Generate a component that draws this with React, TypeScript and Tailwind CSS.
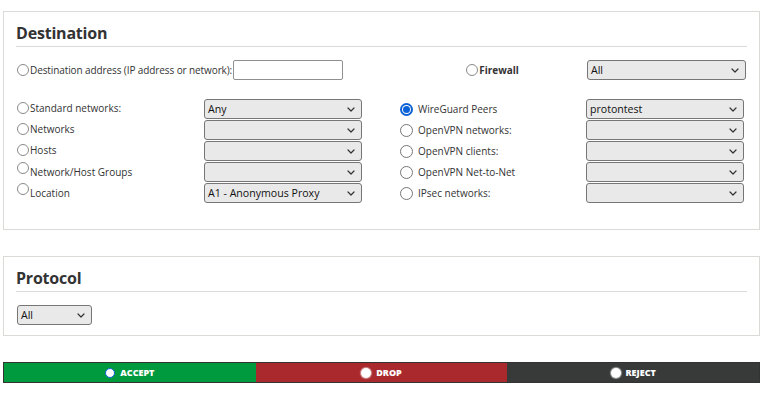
import { ReactNode } from 'react'

// Firewall rule editor: destination + protocol panels and the action bar.

const FONT = "font-['Open_Sans',sans-serif]"

function Chevron() {
  return (
    <svg
      aria-hidden="true"
      width="8"
      height="5"
      viewBox="0 0 8 5"
      fill="none"
      stroke="#333"
      strokeWidth="1.2"
      strokeLinecap="round"
      strokeLinejoin="round"
    >
      <path d="M1 1l3 3 3-3" />
    </svg>
  )
}

/** Grey rounded dropdown the way Chrome paints a native <select>. */
function Dropdown({ value, className }: { value?: string; className?: string }) {
  return (
    <div
      className={`flex h-5 items-center justify-between rounded-[3px] border border-[#767676] bg-[#e9e9e9] pl-[3px] pr-[6px] text-[10.6px] text-[#111] ${className ?? ''}`}
    >
      <span className="leading-none">{value}</span>
      <Chevron />
    </div>
  )
}

/** Thin outline circle used by the left-hand column. */
function Ring({ className }: { className?: string }) {
  return (
    <span
      className={`inline-block h-3 w-3 shrink-0 rounded-full border border-[#8a8a8a] bg-white ${className ?? ''}`}
    />
  )
}

/** Native-looking radio for the right-hand column. */
function NativeRadio({ checked }: { checked?: boolean }) {
  if (checked) {
    return (
      <span className="flex h-[13px] w-[13px] shrink-0 items-center justify-center rounded-full bg-[#0b61d6]">
        <span className="flex h-[9px] w-[9px] items-center justify-center rounded-full bg-white">
          <span className="h-[7px] w-[7px] rounded-full bg-[#0b61d6]" />
        </span>
      </span>
    )
  }
  return <span className="h-[13px] w-[13px] shrink-0 rounded-full border border-[#767676] bg-white" />
}

function Panel({ title, children, className }: { title: string; children: ReactNode; className?: string }) {
  return (
    <section className={`w-[757px] border border-[#dcdad6] bg-white px-3 ${className ?? ''}`}>
      <h2 className={`${FONT} border-b border-[#dcdad6] pb-[1px] pt-[9px] text-[16px] font-bold leading-[24px] text-[#333] tracking-[-0.2px]`}>
        {title}
      </h2>
      {children}
    </section>
  )
}

const leftRows: { label: string; value?: string; raised?: boolean }[] = [
  { label: 'Standard networks:', value: 'Any' },
  { label: 'Networks' },
  { label: 'Hosts' },
  { label: 'Network/Host Groups', raised: true },
  { label: 'Location', value: 'A1 - Anonymous Proxy', raised: true },
]

const rightRows: { label: string; value?: string; checked?: boolean }[] = [
  { label: 'WireGuard Peers', value: 'protontest', checked: true },
  { label: 'OpenVPN networks:' },
  { label: 'OpenVPN clients:' },
  { label: 'OpenVPN Net-to-Net' },
  { label: 'IPsec networks:' },
]

function ActionCell({ label, bg, icon }: { label: string; bg: string; icon: 'blue' | 'white' }) {
  return (
    <div className={`flex flex-1 items-center justify-center gap-[5px] ${bg}`}>
      {icon === 'blue' ? (
        <span className="h-[10px] w-[10px] rounded-full border-[1.5px] border-[#0b61d6] bg-white" />
      ) : (
        <span className="h-[10px] w-[10px] rounded-full bg-white shadow-[0_0_1px_1px_rgba(255,255,255,0.5)]" />
      )}
      <span className={`${FONT} text-[9px] font-extrabold uppercase leading-none text-white`}>{label}</span>
    </div>
  )
}

export default function App() {
  return (
    <div className={`${FONT} min-h-[396px] bg-white pl-[3px] pt-[11px] text-[10px] text-[#333]`}>
      <Panel title="Destination" className="pb-[26px]">
        {/* address / firewall row */}
        <div className="mt-[13px] flex h-5 items-center pl-[1px]">
          <div className="flex w-[381px] items-center">
            <Ring />
            <span className="ml-[1px] tracking-[-0.1px]">Destination address (IP address or network):</span>
            <div className="ml-[1px] h-5 w-[110px] rounded-[2px] border border-[#8f8f8f] bg-white" />
          </div>
          <div className="flex w-[189px] items-center justify-center">
            <Ring />
            <span className="ml-[1px] font-bold">Firewall</span>
          </div>
          <Dropdown value="All" className="w-[159px]" />
        </div>

        <div className="mt-[19px] flex pl-[1px]">
          <div className="flex flex-col gap-[1px]">
            {leftRows.map((r) => (
              <div key={r.label} className="flex h-5 items-center">
                <div className="flex w-[187px] items-center">
                  <Ring className={r.raised ? '-translate-y-[4px]' : '-translate-y-[1px]'} />
                  <span className={`ml-[1px] ${r.raised ? '' : '-translate-y-[1px]'}`}>{r.label}</span>
                </div>
                <Dropdown value={r.value} className="w-[158px]" />
              </div>
            ))}
          </div>
          <div className="ml-[38px] flex flex-col gap-[1px]">
            {rightRows.map((r) => (
              <div key={r.label} className="flex h-5 items-center">
                <div className="flex w-[186px] items-center">
                  <NativeRadio checked={r.checked} />
                  <span className="ml-[5px]">{r.label}</span>
                </div>
                <Dropdown value={r.value} className="w-[158px]" />
              </div>
            ))}
          </div>
        </div>
      </Panel>

      <Panel title="Protocol" className="mt-[26px] pb-[10px]">
        <div className="mt-[13px] pl-[1px]">
          <Dropdown value="All" className="w-[75px]" />
        </div>
      </Panel>

      <div className="mt-[26px] flex h-[21px] w-[757px] border border-[#333]">
        <ActionCell label="Accept" bg="bg-[#009a3e]" icon="blue" />
        <ActionCell label="Drop" bg="bg-[#a9292d]" icon="white" />
        <ActionCell label="Reject" bg="bg-[#383a39]" icon="white" />
      </div>
    </div>
  )
}
